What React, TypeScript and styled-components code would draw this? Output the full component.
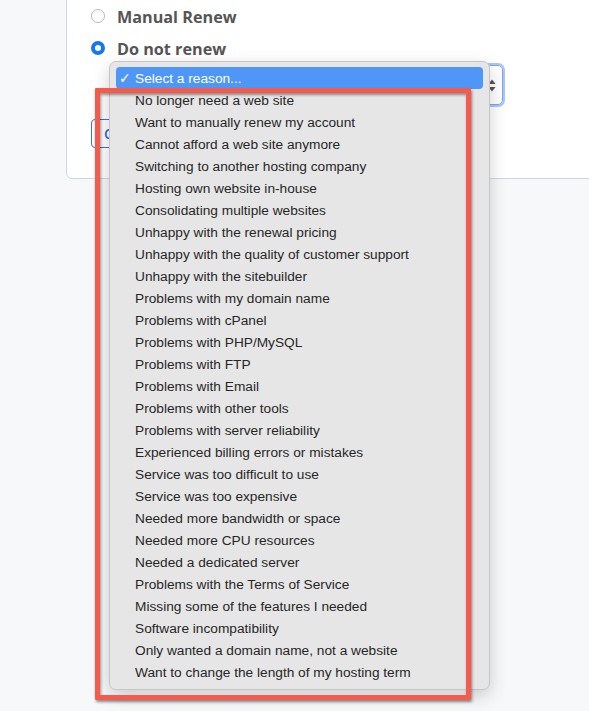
import { FC } from 'react';
import styled, { createGlobalStyle } from 'styled-components';

const Global = createGlobalStyle`
html, body {
  margin: 0;
  padding: 0;
  background: #f6f8fa;
  overflow: hidden;
}
`

const reasons = [
  'No longer need a web site',
  'Want to manually renew my account',
  'Cannot afford a web site anymore',
  'Switching to another hosting company',
  'Hosting own website in-house',
  'Consolidating multiple websites',
  'Unhappy with the renewal pricing',
  'Unhappy with the quality of customer support',
  'Unhappy with the sitebuilder',
  'Problems with my domain name',
  'Problems with cPanel',
  'Problems with PHP/MySQL',
  'Problems with FTP',
  'Problems with Email',
  'Problems with other tools',
  'Problems with server reliability',
  'Experienced billing errors or mistakes',
  'Service was too difficult to use',
  'Service was too expensive',
  'Needed more bandwidth or space',
  'Needed more CPU resources',
  'Needed a dedicated server',
  'Problems with the Terms of Service',
  'Missing some of the features I needed',
  'Software incompatibility',
  'Only wanted a domain name, not a website',
  'Want to change the length of my hosting term',
]

const Page = styled.main`
position: relative;
height: 711px;
overflow: hidden;
`

const Card = styled.section`
margin: -31px 0 0 66px;
width: 620px;
padding: 31px 0 30px 24px;
background: #fff;
border: 1px solid #cbd8e3;
border-radius: 6px;
display: flex;
flex-direction: column;
`

const RadioRow = styled.label`
height: 32px;
display: flex;
align-items: center;
gap: 12px;
font: 700 16.2px 'Open Sans', sans-serif;
color: #555;
`

const Radio = styled.span<{ $checked?: boolean }>`
width: 14px;
height: 14px;
box-sizing: border-box;
border-radius: 50%;
background: #fff;
border: ${p => p.$checked ? '4.5px solid #1677f2' : '1px solid #b9b9b9'};
margin-top: -2px;
`

const SelectBox = styled.div`
margin: 0 0 0 26px;
width: 386px;
height: 40px;
box-sizing: border-box;
border: 1px solid #7fa8f0;
box-shadow: 0 0 0 2px #a9c6f7;
border-radius: 5px;
display: flex;
justify-content: flex-end;
align-items: center;
padding-right: 6px;
`

const Button = styled.button`
margin-top: 14px;
align-self: flex-start;
height: 29px;
padding: 0 12px;
background: #fff;
border: 1px solid #3a72d6;
border-radius: 4px;
color: #2f6ad6;
font: 600 14px 'Open Sans', sans-serif;
`

const Menu = styled.ul`
position: absolute;
left: 109px;
top: 61px;
width: 381px;
margin: 0;
padding: 5px 6px 6px;
box-sizing: border-box;
list-style: none;
background: #e6e6e6;
border: 1px solid #c6c6c6;
border-radius: 7px;
box-shadow: 0 6px 18px rgba(0,0,0,.18);
`

const Item = styled.li<{ $active?: boolean }>`
height: 22px;
display: flex;
align-items: center;
padding-left: 3px;
border-radius: 4px;
font: 400 13.7px 'Liberation Sans', Arial, sans-serif;
color: ${p => p.$active ? '#fff' : '#262626'};
background: ${p => p.$active ? '#4f97f7' : 'transparent'};
.check{
  width: 16px;
  font: 700 14px 'DejaVu Sans', sans-serif;
}
`

const Marker = styled.div`
position: absolute;
left: 95px;
top: 88px;
width: 376px;
height: 612px;
box-sizing: border-box;
border: 5px solid #f55b4c;
border-radius: 1px;
box-shadow: 1px 2px 3px rgba(0,0,0,.45), inset 1px 2px 3px rgba(0,0,0,.4);
pointer-events: none;
`

const Arrows: FC = () => (
  <svg width="8" height="13" viewBox="0 0 8 13">
    <path d="M4 0.5 L7.5 5 H0.5 Z" fill="#555" />
    <path d="M4 12.5 L7.5 8 H0.5 Z" fill="#555" />
  </svg>
)

export default function App() {
  return (
    <Page>
      <Global />
      <Card>
        <RadioRow><Radio />Manual Renew</RadioRow>
        <RadioRow><Radio $checked />Do not renew</RadioRow>
        <SelectBox><Arrows /></SelectBox>
        <Button>Continue</Button>
      </Card>
      <Menu>
        <Item $active><span className="check">✓</span>Select a reason...</Item>
        {reasons.map(r => (
          <Item key={r}><span className="check"></span>{r}</Item>
        ))}
      </Menu>
      <Marker />
    </Page>
  )
}
